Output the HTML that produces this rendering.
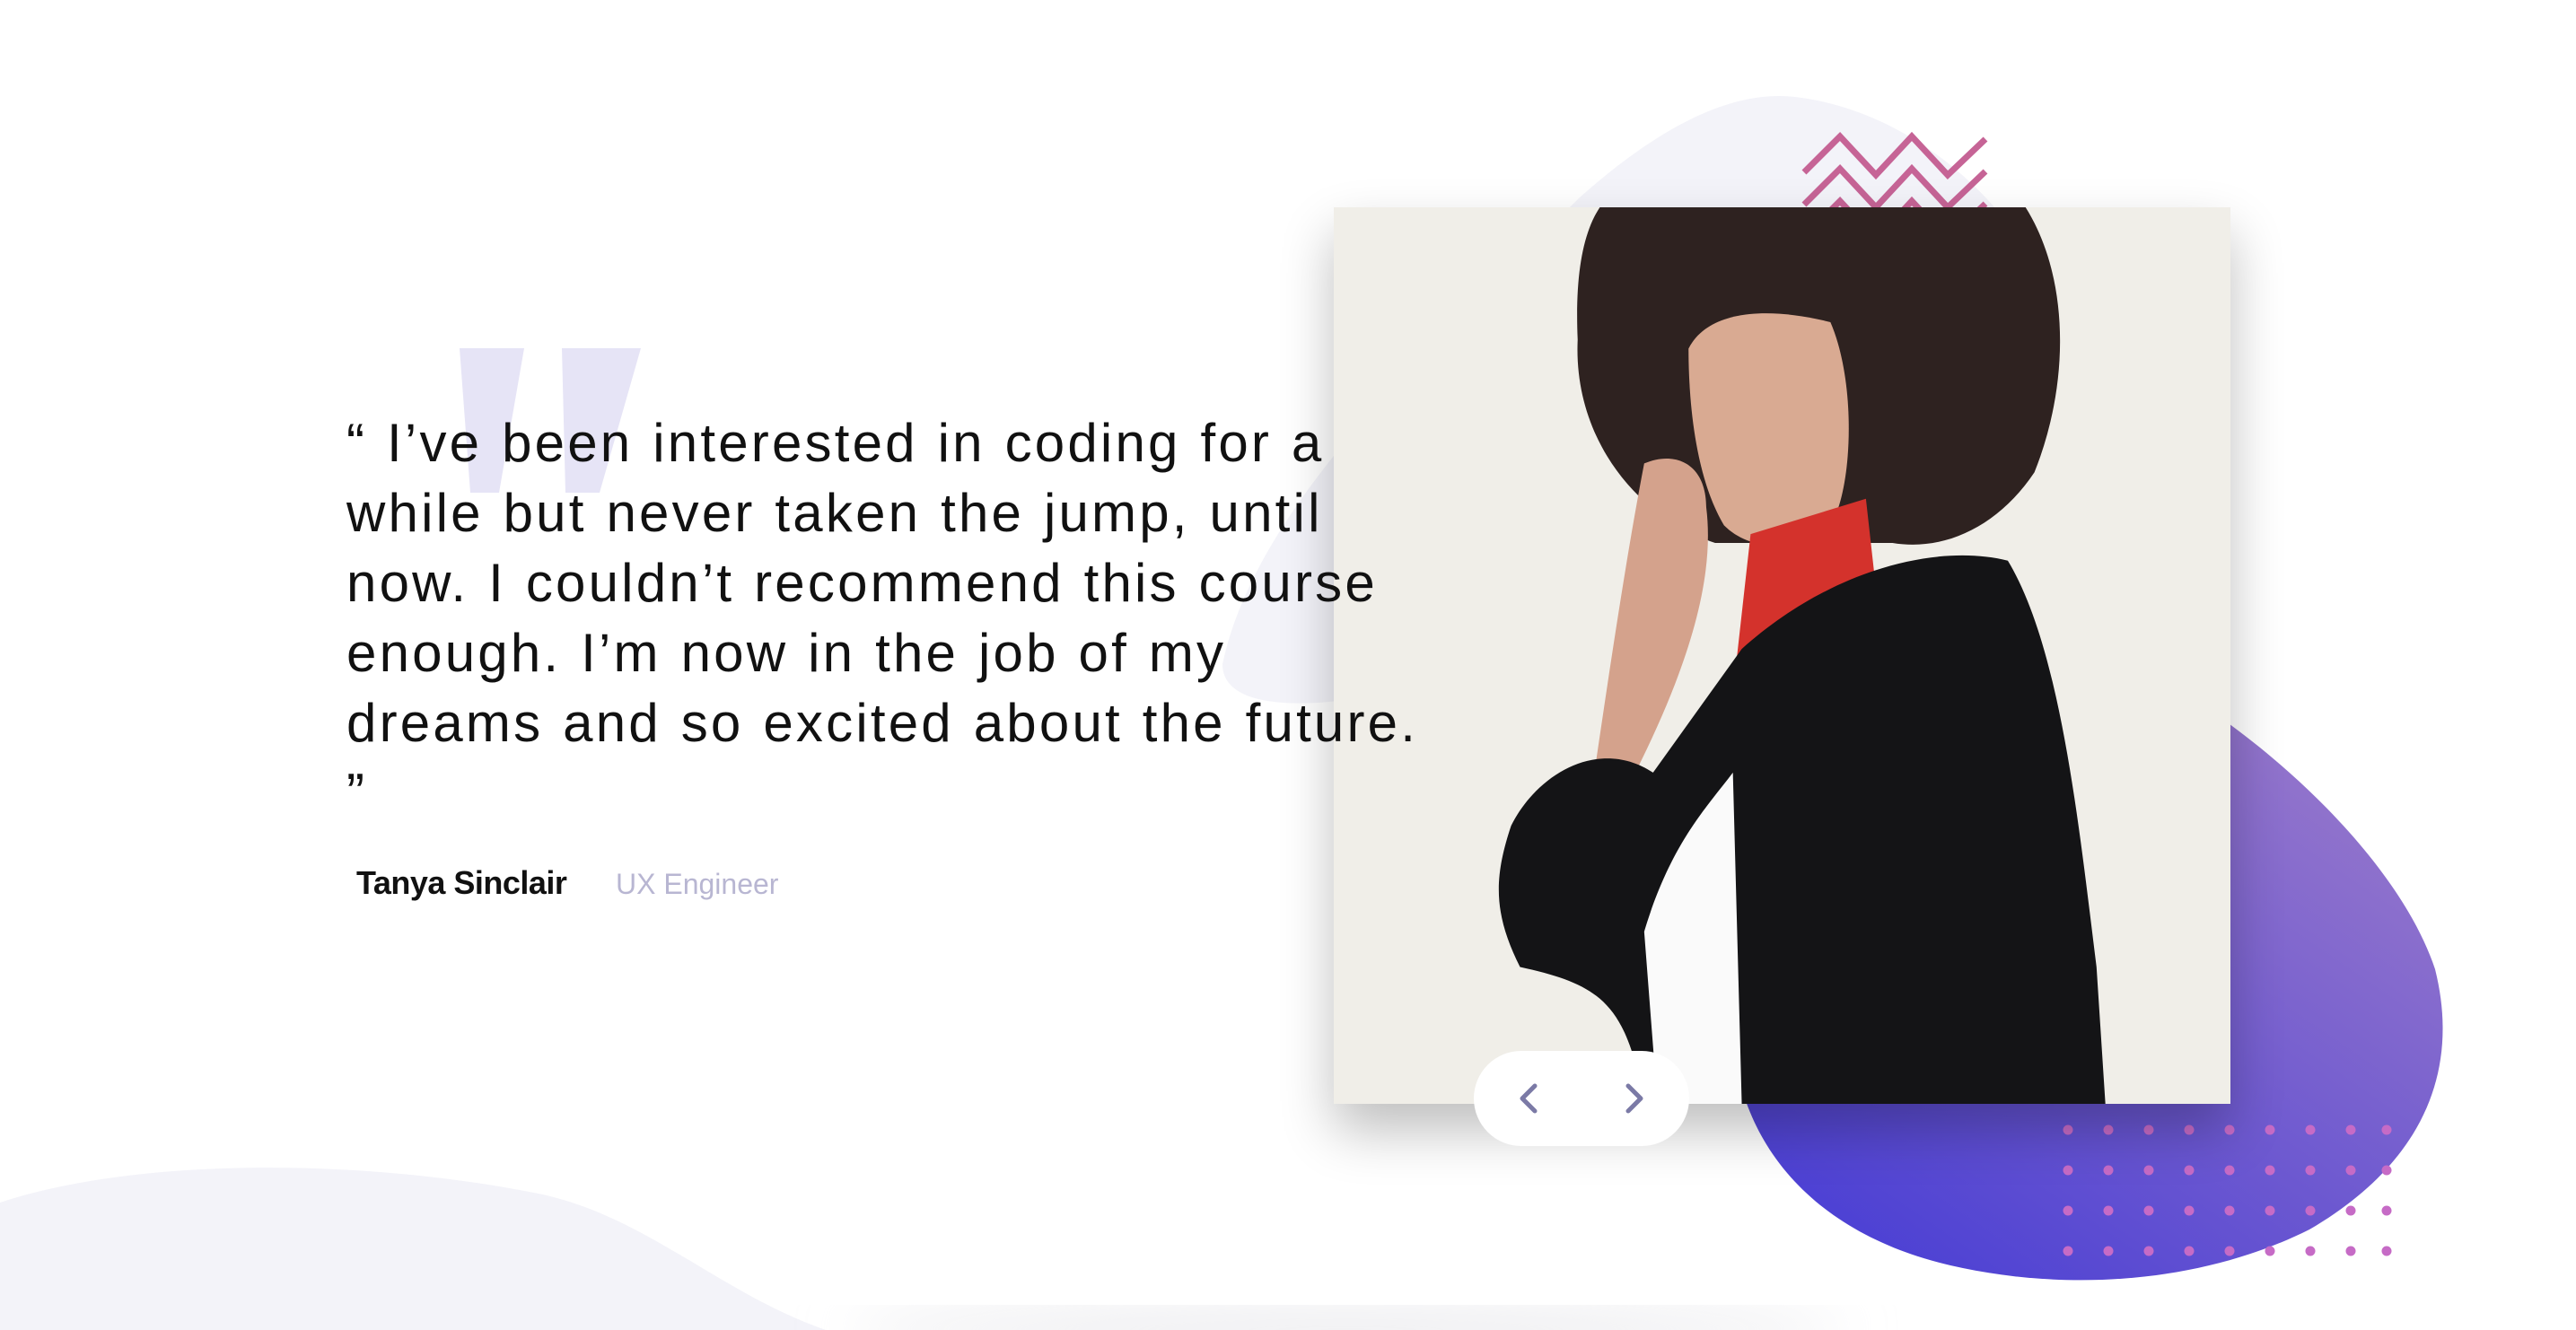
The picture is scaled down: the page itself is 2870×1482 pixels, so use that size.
<!DOCTYPE html>
<html><head><meta charset="utf-8"><style>
html,body{margin:0;padding:0;width:2870px;height:1482px;overflow:hidden;background:#fff;font-family:"Liberation Sans",sans-serif}
.abs{position:absolute}
.q{left:386px;top:455px;font-size:60px;line-height:78px;color:#111;letter-spacing:3.2px;word-spacing:2px;white-space:nowrap}
</style></head><body>
<svg class="abs" style="left:0;top:0" width="2870" height="1482">
<defs>
<linearGradient id="pg" x1="0.2" y1="1" x2="0.8" y2="0.2"><stop offset="0" stop-color="#4a3fd4"/><stop offset="1" stop-color="#9274cc"/></linearGradient>
<filter id="sh" x="-20%" y="-20%" width="140%" height="140%"><feGaussianBlur stdDeviation="30"/></filter>
</defs>
<path d="M1362 740 C1400 560 1600 380 1760 220 C1850 140 1930 100 2000 108 C2100 120 2180 180 2230 240 L2230 900 L1500 780 C1420 790 1362 780 1362 740Z" fill="#f3f3f9"/>
<path d="M0 1340 C150 1290 400 1290 600 1330 C720 1355 800 1440 920 1482 L0 1482Z" fill="#f3f3f9"/>
<ellipse cx="1500" cy="1482" rx="560" ry="20" fill="#e6e6ea" filter="url(#sh)"/>
<path d="M2053 720 C2173 690 2303 700 2413 760 C2533 830 2673 960 2713 1080 C2743 1200 2693 1300 2573 1370 C2453 1430 2303 1440 2173 1410 C2043 1380 1953 1300 1933 1180 C1913 1050 1933 760 2053 720Z" fill="url(#pg)"/>
<g fill="#c66bc6">
<g id="r"><circle cx="2304" cy="1259" r="5.5"/><circle cx="2349" cy="1259" r="5.5"/><circle cx="2394" cy="1259" r="5.5"/><circle cx="2439" cy="1259" r="5.5"/><circle cx="2484" cy="1259" r="5.5"/><circle cx="2529" cy="1259" r="5.5"/><circle cx="2574" cy="1259" r="5.5"/><circle cx="2619" cy="1259" r="5.5"/><circle cx="2659" cy="1259" r="5.5"/></g>
<use href="#r" y="45"/><use href="#r" y="90"/><use href="#r" y="135"/>
</g>
<g fill="none" stroke="#c66496" stroke-width="7">
<path d="M2010 192 L2050 152 L2090 195 L2130 152 L2170 195 L2212 155"/>
<path d="M2010 228 L2050 188 L2090 231 L2130 188 L2170 231 L2212 191"/>
<path d="M2010 264 L2050 224 L2090 267 L2130 224 L2170 267 L2212 227"/>
</g>
<rect x="1486" y="260" width="999" height="1000" fill="#000" opacity="0.25" filter="url(#sh)"/>
<svg x="1486" y="231" width="999" height="999" viewBox="0 0 1011 1015" preserveAspectRatio="none">
<rect width="1011" height="1015" fill="#f0eee8"/>
<path d="M300 0 L780 0 C830 80 830 200 790 300 C750 360 690 390 630 380 L430 380 C340 350 270 260 275 150 C272 80 280 30 300 0Z" fill="#2e2220"/>
<path d="M400 160 C420 120 480 110 560 130 C590 200 585 320 560 360 C520 390 470 390 440 360 C410 310 400 230 400 160Z" fill="#d9aa92"/>
<path d="M350 290 C385 275 420 290 420 340 C430 420 400 520 340 640 C320 700 300 720 285 700 C300 600 325 420 350 290Z" fill="#d4a28c"/>
<path d="M470 370 L600 330 L610 420 L480 620 L450 550Z" fill="#d4322c"/>
<path d="M200 700 C230 640 300 600 360 640 L460 500 C560 410 680 380 760 400 C820 500 840 700 860 860 L870 1015 L350 1015 C330 900 300 880 210 860 C180 800 180 760 200 700Z" fill="#141416"/>
<path d="M350 820 C380 720 420 680 450 640 L460 1015 L365 1015Z" fill="#fafafa"/>
</svg>
<rect x="1642" y="1171" width="240" height="106" rx="53" fill="#fff"/>
<g fill="none" stroke="#7b7aa6" stroke-width="5" stroke-linecap="round" stroke-linejoin="round">
<path d="M1710 1210 L1696 1224 L1710 1238"/><path d="M1814 1210 L1828 1224 L1814 1238"/>
</g>
<path d="M512 388 L584 388 L556 549 L524 549Z M626 388 L714 388 L668 549 L630 549Z" fill="#e6e4f6"/>
</svg>
<div class="abs q">“ I’ve been interested in coding for a<br>while but never taken the jump, until<br>now. I couldn’t recommend this course<br>enough. I’m now in the job of my<br>dreams and so excited about the future.<br>”</div>
<div class="abs" style="left:397px;top:963px;font-size:36px;font-weight:bold;color:#111;letter-spacing:-0.5px">Tanya Sinclair</div>
<div class="abs" style="left:686px;top:967px;font-size:32px;color:#b8b6d2">UX Engineer</div>
</body></html>
